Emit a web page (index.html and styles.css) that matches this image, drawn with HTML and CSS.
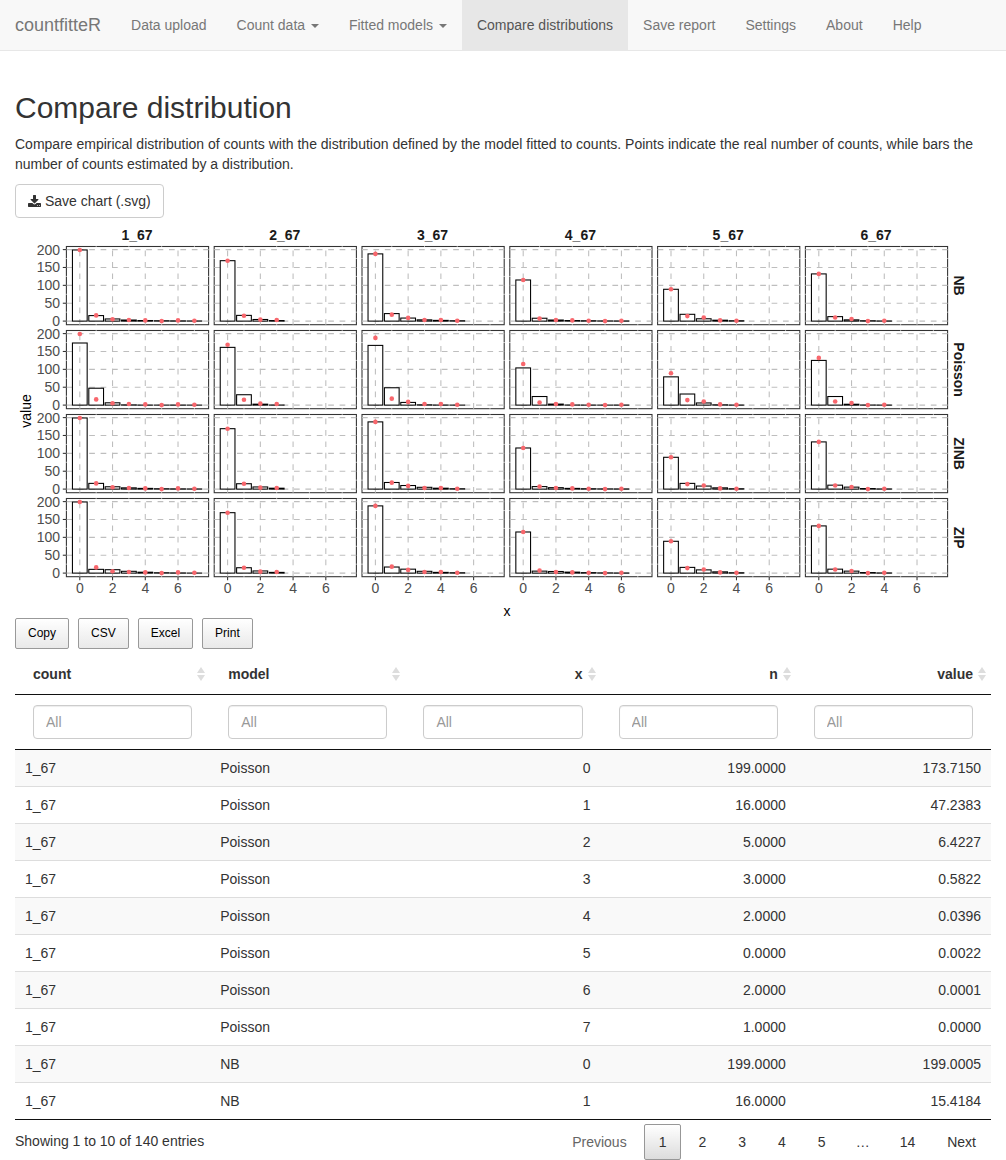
FILE: index.html
```html
<!DOCTYPE html>
<html lang="en">
<head>
<meta charset="utf-8">
<meta name="viewport" content="width=device-width, initial-scale=1">
<title>countfitteR</title>
<link rel="stylesheet" href="styles.css">
</head>
<body>
<nav class="navbar">
  <a class="brand" href="#">countfitteR</a>
  <ul class="nav-list">
    <li><a class="nav-link" href="#">Data upload</a></li>
    <li><a class="nav-link" href="#">Count data <span class="caret"></span></a></li>
    <li><a class="nav-link" href="#">Fitted models <span class="caret"></span></a></li>
    <li><a class="nav-link active" href="#" aria-current="page">Compare distributions</a></li>
    <li><a class="nav-link" href="#">Save report</a></li>
    <li><a class="nav-link" href="#">Settings</a></li>
    <li><a class="nav-link" href="#">About</a></li>
    <li><a class="nav-link" href="#">Help</a></li>
  </ul>
</nav>

<main class="content">
  <h2 class="title">Compare distribution</h2>
  <p class="intro">Compare empirical distribution of counts with the distribution defined by the model fitted to counts. Points indicate the real number of counts, while bars the number of counts estimated by a distribution.</p>
  <button class="save-button" type="button"><svg class="save-icon" viewBox="64 0 1664 1536" aria-hidden="true"><path d="M1344 1344q0-26-19-45t-45-19-45 19-19 45 19 45 45 19 45-19 19-45zm256 0q0-26-19-45t-45-19-45 19-19 45 19 45 45 19 45-19 19-45zm128-224v320q0 40-28 68t-68 28h-1472q-40 0-68-28t-28-68v-320q0-40 28-68t68-28h465l135 136q58 56 136 56t136-56l136-136h464q40 0 68 28t28 68zm-325-569q17 41-14 70l-448 448q-18 19-45 19t-45-19l-448-448q-31-29-14-70 17-39 59-39h256v-448q0-26 19-45t45-19h256q26 0 45 19t19 45v448h256q42 0 59 39z"/></svg> Save chart (.svg)</button>

  <svg class="chart" id="chart" viewBox="0 0 976 400" role="img" aria-label="Counts by value for each model"></svg>

  <div class="export-buttons">
    <button class="export-button" type="button">Copy</button>
    <button class="export-button" type="button">CSV</button>
    <button class="export-button" type="button">Excel</button>
    <button class="export-button" type="button">Print</button>
  </div>

  <table class="data">
    <thead>
      <tr class="names">
        <th scope="col">count</th>
        <th scope="col">model</th>
        <th scope="col" class="number">x</th>
        <th scope="col" class="number">n</th>
        <th scope="col" class="number">value</th>
      </tr>
      <tr class="filters">
        <td><input class="filter" type="text" placeholder="All" aria-label="Filter count"></td>
        <td><input class="filter" type="text" placeholder="All" aria-label="Filter model"></td>
        <td><input class="filter" type="text" placeholder="All" aria-label="Filter x"></td>
        <td><input class="filter" type="text" placeholder="All" aria-label="Filter n"></td>
        <td><input class="filter" type="text" placeholder="All" aria-label="Filter value"></td>
      </tr>
    </thead>
    <tbody>
      <tr><td>1_67</td><td>Poisson</td><td class="number">0</td><td class="number">199.0000</td><td class="number">173.7150</td></tr>
      <tr><td>1_67</td><td>Poisson</td><td class="number">1</td><td class="number">16.0000</td><td class="number">47.2383</td></tr>
      <tr><td>1_67</td><td>Poisson</td><td class="number">2</td><td class="number">5.0000</td><td class="number">6.4227</td></tr>
      <tr><td>1_67</td><td>Poisson</td><td class="number">3</td><td class="number">3.0000</td><td class="number">0.5822</td></tr>
      <tr><td>1_67</td><td>Poisson</td><td class="number">4</td><td class="number">2.0000</td><td class="number">0.0396</td></tr>
      <tr><td>1_67</td><td>Poisson</td><td class="number">5</td><td class="number">0.0000</td><td class="number">0.0022</td></tr>
      <tr><td>1_67</td><td>Poisson</td><td class="number">6</td><td class="number">2.0000</td><td class="number">0.0001</td></tr>
      <tr><td>1_67</td><td>Poisson</td><td class="number">7</td><td class="number">1.0000</td><td class="number">0.0000</td></tr>
      <tr><td>1_67</td><td>NB</td><td class="number">0</td><td class="number">199.0000</td><td class="number">199.0005</td></tr>
      <tr><td>1_67</td><td>NB</td><td class="number">1</td><td class="number">16.0000</td><td class="number">15.4184</td></tr>
    </tbody>
  </table>

  <div class="table-footer">
    <div class="info">Showing 1 to 10 of 140 entries</div>
    <div class="pages">
      <button class="page" type="button" disabled>Previous</button>
      <button class="page current" type="button" aria-current="page">1</button>
      <button class="page" type="button">2</button>
      <button class="page" type="button">3</button>
      <button class="page" type="button">4</button>
      <button class="page" type="button">5</button>
      <span class="ellipsis">…</span>
      <button class="page" type="button">14</button>
      <button class="page" type="button">Next</button>
    </div>
  </div>
</main>
<script src="chart.js"></script>
</body>
</html>
```

FILE: styles.css
```css
* { box-sizing: border-box; }

body {
  margin: 0;
  background: #fff;
  color: #333;
  font: 14px/20px "Liberation Sans", Arial, sans-serif;
}

button, input { font: inherit; color: inherit; }
button { cursor: pointer; }

.navbar {
  display: flex;
  flex-wrap: wrap;
  background: #f8f8f8;
  border-bottom: 1px solid #e7e7e7;
}
.brand {
  padding: 15px;
  color: #777;
  font-size: 18px;
  text-decoration: none;
}
.nav-list {
  display: flex;
  flex-wrap: wrap;
  margin: 0;
  padding: 0;
  list-style: none;
}
.nav-link {
  display: block;
  padding: 15px;
  color: #777;
  text-decoration: none;
}
.nav-link.active { background: #e7e7e7; color: #555; }
.caret {
  display: inline-block;
  margin-left: 2px;
  vertical-align: middle;
  border-top: 4px solid;
  border-right: 4px solid transparent;
  border-left: 4px solid transparent;
}

.content { padding: 20px 15px 0; }
.title {
  margin: 20px 0 10px;
  font-size: 30px;
  line-height: 33px;
  font-weight: 400;
}
.intro { margin: 0 0 10px; }
.save-button {
  display: block;
  padding: 6px 12px;
  background: #fff;
  border: 1px solid #ccc;
  border-radius: 4px;
}
.save-icon {
  width: 13px;
  height: 12px;
  vertical-align: -1px;
  fill: #333;
}

.chart { display: block; width: 100%; height: auto; }
.panel-border { fill: #fff; stroke: #333; stroke-width: 1.07; }
.minor { stroke: #fff; stroke-width: .6; }
.major { stroke: #bebebe; stroke-width: 1.07; stroke-dasharray: 5.7 5.7; }
.bar { fill: none; stroke: #000; stroke-width: 1.07; }
.bar-fill { fill: #fff; }
.point { fill: #f8676d; }
.tick { stroke: #333; stroke-width: 1.07; }
.axis-text { fill: #4d4d4d; font-size: 14px; }
.strip-text { fill: #1a1a1a; font-size: 14px; font-weight: 700; text-anchor: middle; }
.axis-title { fill: #000; font-size: 14px; text-anchor: middle; }
.align-end { text-anchor: end; }
.align-middle { text-anchor: middle; }

.export-buttons { display: flex; gap: 9px; margin-bottom: 5px; }
.export-button {
  padding: 7px 12px 8px;
  background: linear-gradient(#fff, #e9e9e9);
  border: 1px solid #999;
  border-radius: 2px;
  color: #000;
  font-size: 12px;
  line-height: 14px;
}

.data {
  width: 100%;
  table-layout: fixed;
  border-collapse: separate;
  border-spacing: 0;
  border-bottom: 1px solid #111;
}
.data th, .filters td {
  padding: 10px 18px;
  border-bottom: 1px solid #111;
  text-align: left;
}
.data th { position: relative; }
.data th::before, .data th::after {
  content: "";
  position: absolute;
  right: 5px;
  border: 4px solid transparent;
}
.data th::before { top: 9px; border-bottom: 6px solid #ddd; }
.data th::after { top: 21px; border-top: 6px solid #ddd; }
.data .number { text-align: right; }
.filter {
  display: block;
  width: 100%;
  height: 34px;
  padding: 6px 12px;
  background: #fff;
  border: 1px solid #ccc;
  border-radius: 4px;
  box-shadow: inset 0 1px 1px rgba(0, 0, 0, .075);
}
.filter::placeholder { color: #999; opacity: 1; }
.data tbody td { padding: 8px 10px; border-top: 1px solid #ddd; }
.data tbody tr:first-child td { border-top: 0; }
.data tbody tr:nth-child(odd) { background: #f9f9f9; }

.table-footer { display: flex; justify-content: space-between; flex-wrap: wrap; }
.info { padding-top: 11px; }
.pages { display: flex; gap: 2px; padding-top: 4px; }
.page {
  padding: 7px 14px;
  background: none;
  border: 1px solid transparent;
  border-radius: 2px;
}
.page:disabled { color: #666; cursor: default; }
.page.current { background: linear-gradient(#fff, #dcdcdc); border-color: #979797; }
.ellipsis { padding: 8px 13px; }
```

FILE: chart.js
```js
const groups = ["1_67", "2_67", "3_67", "4_67", "5_67", "6_67"];
const counts = [
  [199, 16, 5, 3, 2, 0, 2, 1],
  [169, 15, 4, 3],
  [188, 18, 9, 3, 3, 1],
  [115, 7, 3, 2, 1, 0, 1],
  [89, 14, 10, 2, 1],
  [132, 10, 6, 0, 1]
];
const fitted = {
  NB: [
    [199, 15.4, 6, 3, 1.6, 1, 0.6, 0.4],
    [169, 16, 4.5, 1.5],
    [188, 21, 8.5, 3.5, 2, 1],
    [115, 8, 3, 1.5, 1, 0.5, 0.3],
    [89, 19, 6.5, 2.5, 1],
    [132, 12.5, 3.5, 1, 0.3]
  ],
  Poisson: [
    [173.7, 47.2, 6.4, 0.6, 0, 0, 0, 0],
    [161.5, 29, 2.6, 0.2],
    [167, 48.5, 7.5, 0.8, 0.1, 0],
    [104, 24, 2.8, 0.2, 0, 0, 0],
    [79, 31, 6, 0.8, 0.1],
    [125, 24, 2.4, 0.2, 0]
  ],
  ZINB: [
    [199, 16, 6.5, 3.5, 2, 1, 0.6, 0.4],
    [169, 15, 6, 2.5],
    [188, 18.5, 10, 5, 2.5, 1],
    [115, 7, 4, 2, 1, 0.6, 0.4],
    [89, 16, 8.5, 3.5, 1],
    [132, 11, 5.5, 1.5, 0.4]
  ],
  ZIP: [
    [199, 10.5, 9.5, 5, 2.5, 1, 0.4, 0.1],
    [169, 15, 6, 2],
    [188, 17, 11, 5, 2, 1],
    [115, 5.5, 4.5, 2.7, 1.3, 0.6, 0.2],
    [89, 16, 9, 3.5, 1],
    [132, 11, 5.5, 1.5, 0.4]
  ]
};

const panel = { left: 51.4, top: 28.5, width: 142.2, height: 78.2, stepX: 147.8, stepY: 84 };
const unitX = 16.37;
const unitY = 0.3575;
const barWidth = unitX * 0.9;
const chart = document.getElementById("chart");

function add(name, attributes, text) {
  const node = document.createElementNS("http://www.w3.org/2000/svg", name);
  for (const key in attributes) node.setAttribute(key, attributes[key]);
  if (text !== undefined) node.textContent = text;
  chart.append(node);
}
function line(kind, x1, y1, x2, y2) {
  add("line", { class: kind, x1, y1, x2, y2 });
}

Object.keys(fitted).forEach((model, row) => {
  const top = panel.top + row * panel.stepY;
  const bottom = top + panel.height;
  const yOf = value => top + 74.6 - value * unitY;

  groups.forEach((group, column) => {
    const left = panel.left + column * panel.stepX;
    const right = left + panel.width;
    const xOf = value => left + 13.4 + value * unitX;

    add("rect", { class: "panel-border", x: left, y: top, width: panel.width, height: panel.height });
    [1, 3, 5, 7].forEach(v => line("minor", xOf(v), bottom + 1, xOf(v), top - 1));
    [25, 75, 125, 175].forEach(v => line("minor", left - 1, yOf(v), right + 1, yOf(v)));
    [0, 50, 100, 150, 200].forEach(v => line("major", left, yOf(v), right, yOf(v)));

    fitted[model][column].forEach((value, x) => {
      const box = { x: xOf(x) - barWidth / 2, y: yOf(value), width: barWidth, height: value * unitY + 0.01 };
      add("rect", { class: "bar-fill", ...box });
    });
    [0, 2, 4, 6].forEach(v => line("major", xOf(v), bottom, xOf(v), top));
    fitted[model][column].forEach((value, x) => {
      const box = { x: xOf(x) - barWidth / 2, y: yOf(value), width: barWidth, height: value * unitY + 0.01 };
      add("rect", { class: "bar", ...box });
    });
    counts[column].forEach((value, x) => add("circle", { class: "point", cx: xOf(x), cy: yOf(value), r: 2.3 }));

    if (row === 0) add("text", { class: "strip-text", x: left + panel.width / 2 - 0.5, y: 22 }, group);
    if (row === 3) {
      [0, 2, 4, 6].forEach(v => {
        line("tick", xOf(v), bottom, xOf(v), bottom + 3.6);
        add("text", { class: "axis-text align-middle", x: xOf(v), y: 375 }, v);
      });
    }
  });

  [0, 50, 100, 150, 200].forEach(v => {
    line("tick", panel.left - 3.6, yOf(v), panel.left, yOf(v));
    add("text", { class: "axis-text align-end", x: 45, y: yOf(v) + 5 }, v);
  });
  add("text", { class: "strip-text", transform: `translate(939 ${top + panel.height / 2}) rotate(90)` }, model);
});

add("text", { class: "axis-title", x: 492, y: 398 }, "x");
add("text", { class: "axis-title", transform: "translate(16 193) rotate(-90)" }, "value");
```
